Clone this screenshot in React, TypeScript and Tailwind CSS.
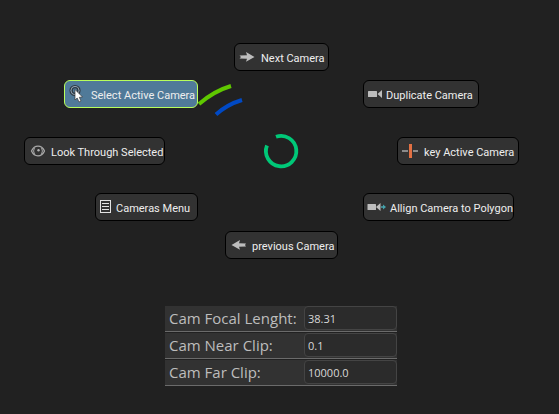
import type { ReactNode } from 'react';
import clsx from 'clsx';

type MenuItem = {
  label: string;
  place: string;
  icon: ReactNode;
  active?: boolean;
};

const ArrowIcon = () => (
  <svg className="h-4 w-4 shrink-0" viewBox="0 0 16 16" fill="#bdbdbd" aria-hidden="true">
    <path d="M0.5 6.5 L8 6.3 L7 3 L15.5 8 L7 12.8 L8 9.7 L0.5 9.4 L2 8 Z" />
  </svg>
);

const ArrowBackIcon = () => (
  <svg className="h-4 w-4 shrink-0" viewBox="0 0 16 16" fill="#bdbdbd" aria-hidden="true">
    <path d="M16 6.5 L9 6.3 L10 3 L1.5 8 L10 12.8 L9 9.7 L16 9.4 L15 8 Z" />
  </svg>
);

const CursorIcon = () => (
  <svg className="h-5 w-5 shrink-0" viewBox="0 0 20 20" aria-hidden="true">
    <circle cx="8" cy="6.5" r="5" fill="none" stroke="#303942" strokeWidth="1.2" />
    <circle cx="8" cy="6.5" r="4" fill="none" stroke="#a5afb5" strokeWidth="0.9" />
    <circle cx="8" cy="6.5" r="2.8" fill="none" stroke="#303942" strokeWidth="1.2" />
    <path d="M8 5.5 V16 L10.2 14 L12 18 L14 17 L12.3 13.3 L15.5 13 Z" fill="#fff" stroke="#3a3a3a" strokeWidth="0.7" />
  </svg>
);

const CameraIcon = () => (
  <svg className="h-4 w-4 shrink-0" viewBox="0 0 16 16" fill="#bdbdbd" aria-hidden="true">
    <rect x="2" y="5" width="9" height="6" rx="0.5" />
    <path d="M11.5 8 L16 4 V12 Z" />
  </svg>
);

const CameraAlignIcon = () => (
  <svg className="h-4 w-5 shrink-0" viewBox="0 0 20 16" aria-hidden="true">
    <rect x="1.5" y="5" width="8.5" height="6" rx="0.5" fill="#bdbdbd" />
    <path d="M10 8 L14.5 4 V12 Z" fill="#bdbdbd" />
    <path d="M15 7.3 H17 V5.5 L20 8 L17 10.5 V8.7 H15 Z" fill="#45a3ad" />
  </svg>
);

const EyeIcon = () => (
  <svg className="h-4 w-4 shrink-0" viewBox="0 0 16 16" fill="none" stroke="#a9a9a9" aria-hidden="true">
    <path d="M2.5 8 C5.5 1.6 12.5 1.6 15.5 8 C12.5 14.4 5.5 14.4 2.5 8 Z" strokeWidth="1.3" />
    <path d="M5.4 5 Q3.8 8 5.4 11 M12.6 5 Q14.2 8 12.6 11" strokeWidth="1" />
    <circle cx="9.5" cy="7.2" r="1.2" fill="#b4b4b4" stroke="none" />
  </svg>
);

const KeyIcon = () => (
  <svg className="h-4 w-4 shrink-0" viewBox="0 0 16 16" aria-hidden="true">
    <path d="M0 8 H6 M11 8 H16" stroke="#8a8a8a" strokeWidth="2" />
    <rect x="7" y="1" width="3" height="14" fill="#e27043" />
  </svg>
);

const ListIcon = () => (
  <svg className="h-4 w-4 shrink-0" viewBox="0 0 16 16" fill="none" stroke="#e3e3e3" aria-hidden="true">
    <rect x="2.5" y="1.5" width="10" height="12" />
    <path d="M4 4.5 H11 M4 7.5 H11 M4 10.5 H11" />
  </svg>
);

const items: MenuItem[] = [
  { label: 'Next Camera', place: 'left-[210px] top-0 w-[95px] pl-1 gap-1.5', icon: <ArrowIcon /> },
  { label: 'Select Active Camera', place: 'left-10 top-[37px] w-[134px] pl-0.5 gap-1', icon: <CursorIcon />, active: true },
  { label: 'Duplicate Camera', place: 'left-[339px] top-[37px] w-[116px] pl-0.5 gap-1', icon: <CameraIcon /> },
  { label: 'Look Through Selected', place: 'left-0 top-[94px] w-[141px] pl-1 gap-1.5', icon: <EyeIcon /> },
  { label: 'key Active Camera', place: 'left-[373px] top-[94px] w-[122px] pl-1 gap-1.5', icon: <KeyIcon /> },
  { label: 'Cameras Menu', place: 'left-[71px] top-[150px] w-[103px] pl-0.5 gap-0.5', icon: <ListIcon /> },
  { label: 'Allign Camera to Polygon', place: 'left-[339px] top-[150px] w-[151px] pl-0.5 gap-1', icon: <CameraAlignIcon /> },
  { label: 'previous Camera', place: 'left-[201px] top-[188px] w-[113px] pl-1 gap-1.5', icon: <ArrowBackIcon /> },
];

const fields = [
  { id: 'focal', label: 'Cam Focal Lenght:', value: '38.31' },
  { id: 'near', label: 'Cam Near Clip:', value: '0.1' },
  { id: 'far', label: 'Cam Far Clip:', value: '10000.0' },
];

export default function App() {
  return (
    <main className="min-h-screen bg-[#212121] pt-[43px] font-['Open_Sans',sans-serif]">
      <nav aria-label="Camera menu" className="relative mx-auto h-[216px] w-[511px]">
        <svg className="absolute left-[170px] top-9 h-[92px] w-[108px]" viewBox="0 0 108 92" fill="none" aria-hidden="true">
          <path d="M5 25 Q20 12 37 7" stroke="#5fc800" strokeWidth="4" />
          <path d="M22 35.5 Q33 25.5 48 21" stroke="#0049c4" strokeWidth="4" />
          <path d="M82 57.8 A15.2 15.2 0 1 1 73 66.5" stroke="#00c878" strokeWidth="3.8" />
        </svg>
        {items.map((item) => (
          <button
            key={item.label}
            type="button"
            className={clsx(
              "absolute flex h-7 items-center whitespace-nowrap rounded-md border font-['Roboto',sans-serif] text-[11px] text-[#eeeeee]",
              item.active ? 'border-[#b8ff5c] bg-[#507a99]' : 'border-black bg-[#323232]',
              item.place,
            )}
          >
            {item.icon}
            <span className="pt-1">{item.label}</span>
          </button>
        ))}
      </nav>
      <form className="mt-[47px] flex justify-center pl-[3px]">
        <div className="w-[232px]">
          {fields.map((field) => (
            <div key={field.id} className="mb-px flex h-[26px] border-b border-[#6b6b6b] bg-[#323232] pb-px">
              <label htmlFor={field.id} className="flex-1 whitespace-nowrap pl-1 text-[15px] leading-6 text-[#bdbdbd]">
                {field.label}
              </label>
              <input
                id={field.id}
                defaultValue={field.value}
                className="h-6 w-[93px] rounded-sm border border-[#444444] bg-[#2b2b2b] px-[3px] text-[11px] text-[#d8d8d8]"
              />
            </div>
          ))}
        </div>
      </form>
    </main>
  );
}
